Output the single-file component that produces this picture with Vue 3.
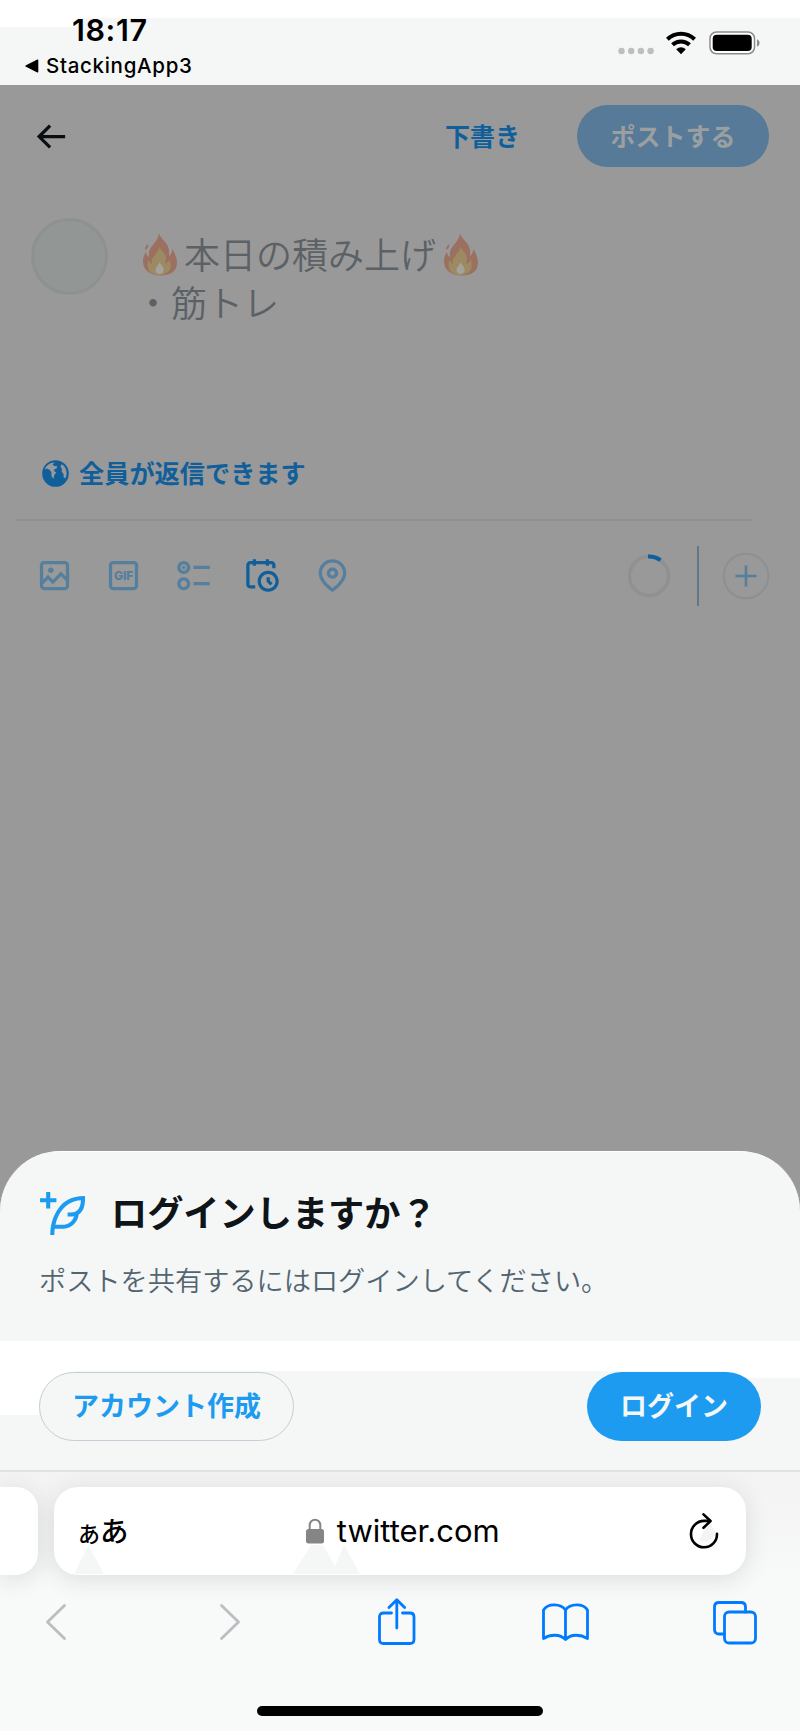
<script setup>
const tools = [
  {
    name: 'image',
    d: 'M3 5.5C3 4.119 4.119 3 5.5 3h13C19.881 3 21 4.119 21 5.5v13c0 1.381-1.119 2.5-2.5 2.5h-13C4.119 21 3 19.881 3 18.5v-13zM5.5 5c-.276 0-.5.224-.5.5v9.086l3-3 3 3 5-5 3 3V5.5c0-.276-.224-.5-.5-.5h-13zM19 15.414l-3-3-5 5-3-3-3 3V18.5c0 .276.224.5.5.5h13c.276 0 .5-.224.5-.5v-3.086zM9.75 7C8.784 7 8 7.784 8 8.75s.784 1.75 1.75 1.75 1.75-.784 1.75-1.75S10.716 7 9.75 7z',
  },
  {
    name: 'gif',
    d: 'M3 5.5C3 4.119 4.12 3 5.5 3h13C19.88 3 21 4.119 21 5.5v13c0 1.381-1.12 2.5-2.5 2.5h-13C4.12 21 3 19.881 3 18.5v-13zM5.5 5c-.28 0-.5.224-.5.5v13c0 .276.22.5.5.5h13c.28 0 .5-.224.5-.5v-13c0-.276-.22-.5-.5-.5h-13z',
  },
  {
    name: 'poll',
    d: 'M6 5c-1.1 0-2 .895-2 2s.9 2 2 2 2-.895 2-2-.9-2-2-2zM2 7c0-2.209 1.79-4 4-4s4 1.791 4 4-1.79 4-4 4-4-1.791-4-4zm20 1H12V6h10v2zM6 15c-1.1 0-2 .895-2 2s.9 2 2 2 2-.895 2-2-.9-2-2-2zm-4 2c0-2.209 1.79-4 4-4s4 1.791 4 4-1.79 4-4 4-4-1.791-4-4zm20 1H12v-2h10v2zM7 7c0 .552-.45 1-1 1s-1-.448-1-1 .45-1 1-1 1 .448 1 1z',
  },
  {
    name: 'schedule',
    active: true,
    d: 'M6 3V2h2v1h6V2h2v1h1.5C18.88 3 20 4.119 20 5.5v2h-2v-2c0-.276-.22-.5-.5-.5H16v1h-2V5H8v1H6V5H4.5c-.28 0-.5.224-.5.5v12c0 .276.22.5.5.5h3v2h-3C3.12 20 2 18.881 2 17.5v-12C2 4.119 3.12 3 4.5 3H6zm9.5 8c-2.49 0-4.5 2.015-4.5 4.5s2.01 4.5 4.5 4.5 4.5-2.015 4.5-4.5-2.01-4.5-4.5-4.5zM9 15.5C9 11.91 11.91 9 15.5 9s6.5 2.91 6.5 6.5-2.91 6.5-6.5 6.5S9 19.09 9 15.5zm5.5-2.5h2v2.086l1.71 1.707-1.42 1.414-2.29-2.293V13z',
  },
  {
    name: 'location',
    d: 'M12 7c-1.93 0-3.5 1.57-3.5 3.5S10.07 14 12 14s3.5-1.57 3.5-3.5S13.93 7 12 7zm0 5c-.827 0-1.5-.673-1.5-1.5S11.173 9 12 9s1.5.673 1.5 1.5S12.827 12 12 12zm0-10c-4.687 0-8.5 3.813-8.5 8.5 0 5.967 7.621 11.116 7.945 11.332l.555.37.555-.37c.324-.216 7.945-5.365 7.945-11.332C20.5 5.813 16.687 2 12 2zm0 17.77c-1.665-1.241-6.5-5.196-6.5-9.27C5.5 6.916 8.416 4 12 4s6.5 2.916 6.5 6.5c0 4.073-4.835 8.028-6.5 9.27z',
  },
]
</script>

<template>
  <div class="phone">
    <svg class="defs" width="0" height="0">
      <symbol id="flame" viewBox="0 0 34 43">
        <path fill="#9b7060" d="M16 0c1 6 9 9 10 17 .3 3 0 5 0 6 2-1 3-4 3.500-7 4 7 6 14 3 20-3 5-8 6-14 6.500C8 42.500 0 38 0 28c0-3 1-6 3-9 .5 3 1 4 3 5C4 13 15 11 16 0z" />
        <path fill="#9b7060" d="M5 11c.5 3-.5 5-3 6 0-3 1-4 3-6z" />
        <path fill="#9c8a62" d="M16.500 13c0 4 6 6 6.500 12 0 3-1 5-1 6 3-1 4-3 4.500-5 2 6 2 11-3 14-4 2.500-11 2.500-15 0-4-3-5-8-3-13 1 2 2 3 3.500 4C7 23 16 21 16.500 13z" />
        <path fill="#a3a39b" d="M16.500 29c1 3 5 5 4 9-1 4-7 4-8 0-.5-4 3-5 4-9z" />
      </symbol>
    </svg>

    <header class="status">
      <div class="status-left">
        <div class="time">18:17</div>
        <div class="back-app">
          <svg width="14" height="14" viewBox="0 0 14 14"><path d="M1 6.200 12.300.6q1-.4 1 .6v11.600q0 1-1 .6L1 7.800q-1.500-.8 0-1.600z" /></svg>
          <span>StackingApp3</span>
        </div>
      </div>
      <div class="status-right">
        <svg class="dots" width="36" height="8" viewBox="0 0 36 8" fill="#bcbebf"><circle cx="3.500" cy="4" r="3.200" /><circle cx="13.200" cy="4" r="3.200" /><circle cx="22.900" cy="4" r="3.200" /><circle cx="32.600" cy="4" r="3.200" /></svg>
        <svg class="wifi" width="30" height="24" viewBox="0 0 30 24">
          <g fill="none" stroke="#000" stroke-width="4"><path d="M1.400 8.300A19.500 19.500 0 0 1 28.600 8.300" /><path d="M6.500 13.800a12.300 12.300 0 0 1 17 0" /></g>
          <path d="M10.200 18.200a7 7 0 0 1 9.600 0L15 23.300z" />
        </svg>
        <svg class="battery" width="52" height="24" viewBox="0 0 52 24">
          <rect x="1" y="1" width="44.500" height="21.800" rx="6.500" fill="#fff" stroke="#8b8c8c" stroke-width="1.500" />
          <rect x="3.700" y="3.800" width="39" height="16.300" rx="4" />
          <path d="M48 8.200c3.400 1.500 3.400 6 0 7.500z" fill="#8b8c8c" />
        </svg>
      </div>
    </header>

    <main class="compose">
      <div class="compose-head">
        <svg class="back" width="39" height="39" viewBox="0 0 24 24" fill="#0b0e11"><path d="M7.414 13l5.043 5.040-1.414 1.420L3.586 12l7.457-7.460 1.414 1.420L7.414 11H21v2H7.414z" /></svg>
        <span class="draft">下書き</span>
        <button class="post">ポストする</button>
      </div>

      <div class="editor">
        <div class="avatar"></div>
        <div class="draft-text">
          <div class="line"><svg class="flame" width="34" height="43"><use href="#flame" /></svg><span>本日の積み上げ</span><svg class="flame" width="34" height="43"><use href="#flame" /></svg></div>
          <div class="line"><span>・筋トレ</span></div>
        </div>
      </div>

      <div class="reply">
        <svg width="27" height="27" viewBox="0 0 27 27">
          <circle cx="13.500" cy="13.500" r="13.300" fill="#105f9b" />
          <path fill="#999" d="M2.800 9.500C4 5.300 8 2.500 12.500 2.400L10.600 4.600l1.600 1.300 3 .3-.6 2.300-2.600 1 .6 2 1.700 1.100-2.200 2.600-.5 3.800-2.200-3V12l-2.300-2.600-2.200-1z" />
          <path fill="#999" d="M19.500 4.300C23 6 24.600 9.500 24.600 13.200c0 2-.5 3.600-1.300 5.200L21.500 17l.2-2.600-2-3 .3-2.400-1.500-2.200z" />
        </svg>
        <span>全員が返信できます</span>
      </div>

      <div class="toolbar">
        <svg v-for="t in tools" :key="t.name" class="tool" :class="{ active: t.active }" width="39" height="39" viewBox="0 0 24 24">
          <path :d="t.d" />
          <text v-if="t.name === 'gif'" x="12.100" y="14.600" text-anchor="middle" class="gif">GIF</text>
        </svg>
        <svg class="ring" width="44" height="44" viewBox="0 0 44 44" fill="none" stroke-width="3.400">
          <circle cx="22" cy="22" r="19.500" stroke="#8e9190" />
          <path d="M21 2.500a19.500 19.500 0 0 1 12.500 3.700" stroke="#105f9b" stroke-width="4" />
        </svg>
        <div class="divider"></div>
        <svg class="plus" width="48" height="48" viewBox="0 0 48 48" fill="none">
          <circle cx="24" cy="24" r="22.300" stroke="#8c9090" stroke-width="2" />
          <path d="M13.500 24h21M24 13.500v21" stroke="#567e9d" stroke-width="2.600" />
        </svg>
      </div>
    </main>

    <section class="sheet-area">
      <div class="sheet">
        <div class="sheet-title">
          <svg width="49" height="49" viewBox="0 0 24 24" fill="#1d9bf0"><path d="M23 3c-6.620-.1-10.380 2.421-13.050 6.030C7.290 12.610 6 17.331 6 22h2c0-1.007.07-2.012.19-3H12c4.100 0 7.480-3.082 7.940-7.054C22.790 10.147 23.170 6.359 23 3zm-7 8h-1.500v2H16c.63-.016 1.200-.08 1.720-.188C16.950 15.240 14.680 17 12 17H8.550c.57-2.512 1.570-4.851 3-6.780 2.160-2.912 5.290-4.911 9.450-5.187C20.950 8.079 19.900 11 16 11zM4 9V6H1V4h3V1h2v3h3v2H6v3H4z" /></svg>
          <h1>ログインしますか？</h1>
        </div>
        <p>ポストを共有するにはログインしてください。</p>
        <div class="actions">
          <button class="signup">アカウント作成</button>
          <button class="login">ログイン</button>
        </div>
      </div>
    </section>

    <footer class="browser">
      <div class="tabs-row">
        <div class="prev-tab"></div>
        <div class="address">
          <div class="kana"><span class="small">あ</span><span>あ</span></div>
          <div class="url">
            <svg width="18" height="26" viewBox="0 0 18 26"><path d="M3.700 12V7a5.300 5.300 0 0 1 10.600 0v5" fill="none" stroke="#858587" stroke-width="2" /><rect y="11" width="18" height="14.500" rx="2.500" fill="#858587" /></svg>
            <span>twitter.com</span>
          </div>
          <svg class="reload" width="32" height="38" viewBox="0 0 32 38" fill="none" stroke="#000" stroke-width="2.600" stroke-linecap="round" stroke-linejoin="round">
            <path d="M21 9.500 11 28A13 13 0 0 0 28.500 21z" fill="#f3f5f5" stroke="none" />
            <path d="M22 8.900H16a13 13.200 0 1 0 13 13" /><path d="M15.500 2.400l7 6.600-7 6.800" />
          </svg>
          <svg class="facets" width="692" height="30" viewBox="0 0 692 30" fill="#f5f7f6"><path d="M20 30 34.500 1 50 30zM239 30 257 1h12l12 21 9-21 16 29z" /></svg>
        </div>
      </div>
      <nav>
        <svg width="22" height="48" viewBox="0 0 22 48" class="line-icon muted"><path d="M19.500 7.500 2.500 24l17 16.500" /></svg>
        <svg width="22" height="48" viewBox="0 0 22 48" class="line-icon muted forward"><path d="M2.500 7.500 19.500 24l-17 16.500" /></svg>
        <svg width="38" height="48" viewBox="0 0 38 48" class="line-icon share"><path d="M13.500 15H5.500Q1.500 15 1.500 19v22.500q0 4 4 4h26.500q4 0 4-4V19q0-4-4-4h-7.500M18.800 30V2M11 9.500 18.800 1.800l7.800 7.700" /></svg>
        <svg width="47" height="48" viewBox="0 0 47 48" class="line-icon book"><path d="M23.500 41.500V12C19 5.500 6 5 1.500 12v28.500C8 36 18 36 23.500 41.500 29 36 38 36 45.500 40.500V12C41 5 28 5.500 23.500 12" /></svg>
        <svg width="44" height="48" viewBox="0 0 44 48" class="line-icon windows"><path d="M11.500 36H6q-4.500 0-4.500-4.500V9Q1.500 4.500 6 4.500h22q4.500 0 4.500 4.500v5" /><rect x="11.500" y="14" width="31" height="31" rx="4.500" /></svg>
      </nav>
      <div class="home"></div>
    </footer>
  </div>
</template>

<style>
body { margin: 0; }
</style>

<style scoped>
.phone {
  width: 800px;
  height: 1731px;
  overflow: hidden;
  display: flex;
  flex-direction: column;
  background: #999;
  font-family: "Noto Sans CJK JP", "Noto Sans", sans-serif;
}
.phone * { box-sizing: border-box; }
svg { display: block; flex: none; }
.defs { position: absolute; }
button { border: 0; padding: 0; margin: 0; font-family: inherit; }

.status {
  height: 85px;
  flex: none;
  display: flex;
  justify-content: space-between;
  background: linear-gradient(#fff, #fff) 0 0 / 76px 27px no-repeat,
    linear-gradient(#fff, #fff) 0 0 / 100% 18px no-repeat, #f5f7f6;
  font-family: Inter, sans-serif;
  color: #000;
}
.status-left { padding-top: 12px; }
.time { margin-left: 72px; font-size: 30.500px; line-height: 36px; font-weight: 600; letter-spacing: 0.600px; }
.back-app { display: flex; align-items: center; gap: 7px; margin: 5px 0 0 25px; height: 26px; font-size: 20.500px; line-height: 26px; letter-spacing: 0.700px; font-weight: 500; }
.status-right { display: flex; padding: 31px 39px 0 0; }
.dots { margin: 16px 12px 0 0; }
.wifi { margin-right: 13px; }

.compose { height: 1066px; flex: none; display: flex; flex-direction: column; }
.compose-head { display: flex; align-items: center; height: 62px; margin: 20px 31px 0; }
.draft { margin: -2px 0 0 auto; font-size: 25px; line-height: 36px; font-weight: 700; color: #105f9b; }
.post { width: 192px; height: 62px; margin-left: 57px; border-radius: 31px; background: #567a97; color: #9b9fa1; font-size: 25px; line-height: 58px; font-weight: 700; padding-bottom: 3px; }
.editor { display: flex; height: 120px; margin: 51px 31px 0; }
.avatar { width: 77px; height: 77px; border-radius: 50%; background: #929695; border: 3px solid #8d9291; }
.draft-text { margin: 12px 0 0 27px; }
.line { display: flex; align-items: center; height: 48px; font-size: 36px; line-height: 48px; font-weight: 350; color: #5b6165; }
.line span { margin-top: -3px; }
.line .flame { margin: 0 7px 0 8px; }
.reply { display: flex; align-items: center; gap: 10px; height: 36px; margin: 117px 0 0 42px; font-size: 25.200px; line-height: 34px; font-weight: 700; color: #105f9b; }
.reply span { margin-top: -3px; }
.toolbar { display: flex; align-items: center; height: 112px; margin: 28px 47px 0 15px; padding-left: 19.500px; border-top: 2px solid #909292; }
.tool { margin: -2px 30.600px 0 0; fill: #567e9d; }
.tool.active { fill: #105f9b; }
.gif { font: 800 7.400px Inter, sans-serif; }
.ring { margin-left: auto; margin-right: 26px; }
.divider { width: 2px; height: 60px; flex: none; background: #60778a; margin-right: 23px; }
.plus { margin-right: -17px; }

.sheet-area { height: 321px; flex: none; background: #999; }
.sheet {
  height: 321px;
  border-radius: 60px 60px 0 0;
  border-top: 1px solid #fff;
  border-bottom: 2px solid #dfe2e1;
  background: linear-gradient(#fff, #fff) 0 189px / 39px 74px no-repeat,
    linear-gradient(#fff, #fff) 0 189px / 75px 60px no-repeat,
    linear-gradient(#fff, #fff) 100% 189px / 75px 37px no-repeat,
    linear-gradient(#fff, #fff) 0 189px / 100% 30px no-repeat, #f5f7f6;
}
.sheet-title { display: flex; align-items: center; gap: 24px; height: 52px; margin: 36px 0 0 38px; }
h1 { margin: -6px 0 0; font-size: 36.200px; line-height: 52px; font-weight: 700; color: #0f1419; }
p { margin: 21px 0 0 39px; font-size: 27.200px; line-height: 36px; font-weight: 350; color: #536471; }
.actions { display: flex; justify-content: space-between; margin: 75px 39px 0; }
.actions button { height: 69px; border-radius: 35px; font-size: 27px; line-height: 62px; font-weight: 700; padding-bottom: 3px; }
.signup { width: 255px; border: 1.500px solid #c3ced6; background: #f5f7f6; color: #1d9bf0; }
.login { width: 174px; background: #1d9bf0; color: #f5f7f6; }

.browser { height: 259px; flex: none; background: linear-gradient(#f3f3f3, #f8f9f9 110px); overflow: hidden; }
.tabs-row { display: flex; gap: 16px; padding-top: 15px; }
.prev-tab, .address { height: 88px; background: #fff; box-shadow: 0 4px 24px rgba(30, 45, 40, 0.13); }
.prev-tab { width: 38px; border-radius: 0 22px 22px 0; }
.address { position: relative; width: 692px; border-radius: 24px; display: flex; align-items: center; justify-content: space-between; padding: 0 26px 0 24px; }
.facets { position: absolute; left: 0; bottom: 1px; }
.kana { display: flex; align-items: baseline; font-size: 28.500px; line-height: 40px; font-weight: 500; color: #000; margin-top: 0; }
.kana .small { font-size: 22px; }
.url { display: flex; align-items: center; gap: 13px; margin: 0 7px 0 -4px; font-family: Inter, sans-serif; font-size: 31px; line-height: 40px; letter-spacing: 0; color: #000; }
nav { display: flex; padding: 23px 0 0 45px; }
.forward { margin-left: 152px; }
.share { margin-left: 137px; }
.book { margin-left: 126px; }
.windows { margin-left: 124px; }
.line-icon { fill: none; stroke: #007aff; stroke-width: 2.800; stroke-linecap: round; stroke-linejoin: round; }
.muted { stroke: #bcbdc0; }
.home { width: 286px; height: 10px; margin: 60px auto 0; border-radius: 5px; background: #000; }
</style>
